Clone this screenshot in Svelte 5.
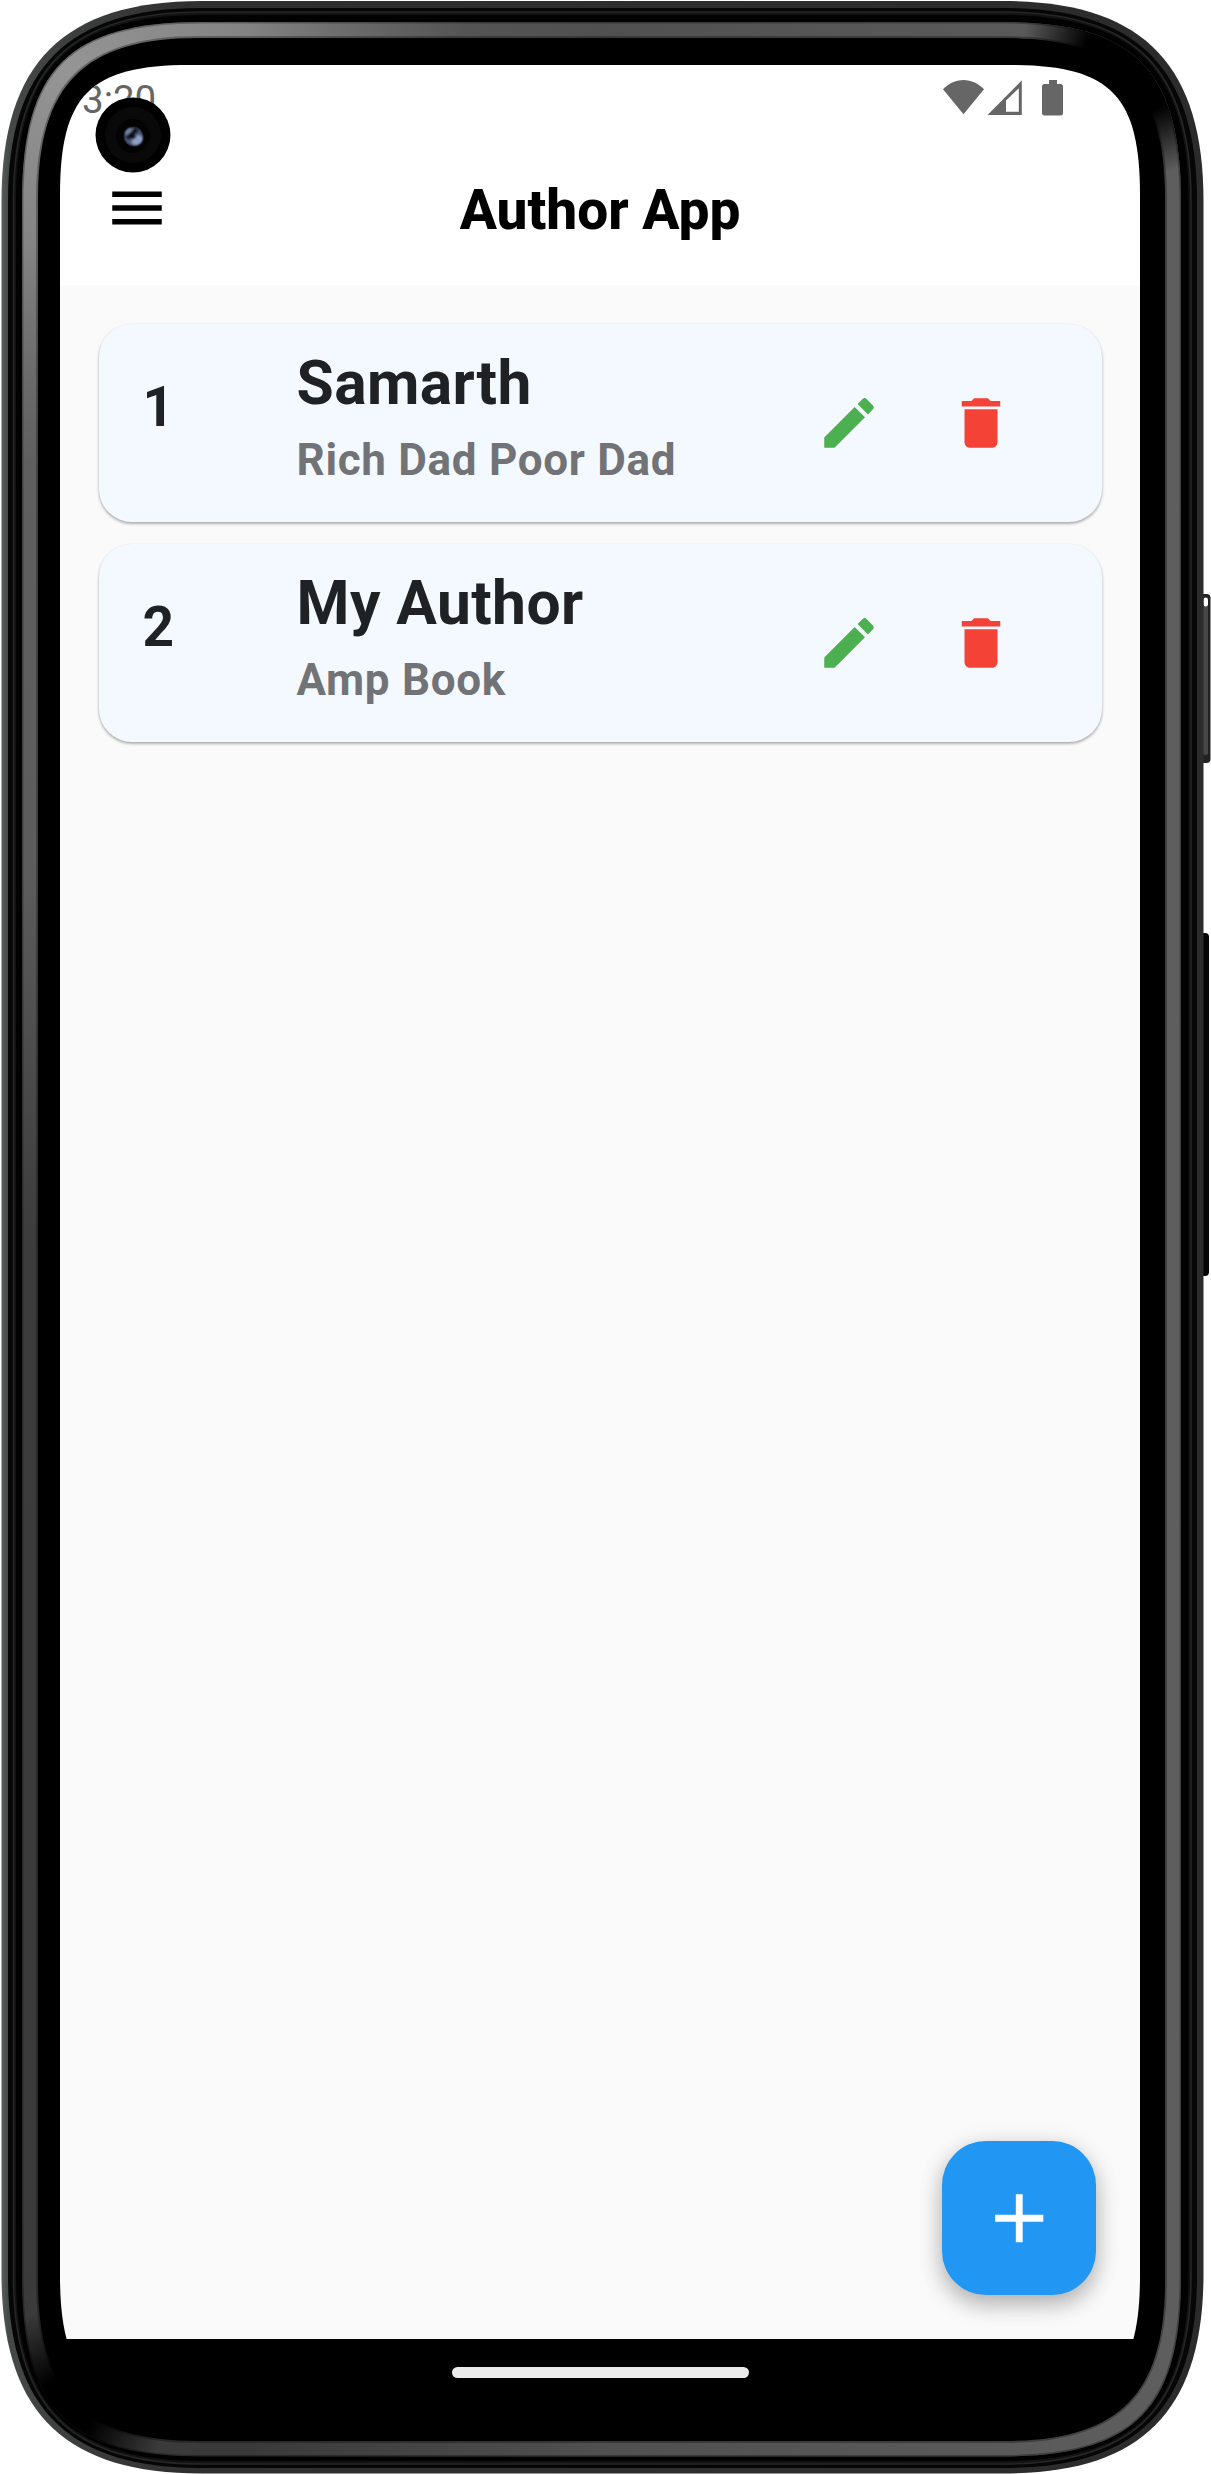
<script>
  const authors = [
    { id: 1, name: 'Samarth', book: 'Rich Dad Poor Dad' },
    { id: 2, name: 'My Author', book: 'Amp Book' }
  ];

  // Closed outline with continuous-curvature corners: s = corner span, k = handle length ratio
  function outline(l, t, r, b, s, k) {
    const h = s * (1 - k);
    return (
      `M${l} ${t + s}C${l} ${t + h} ${l + h} ${t} ${l + s} ${t}` +
      `H${r - s}C${r - h} ${t} ${r} ${t + h} ${r} ${t + s}` +
      `V${b - s}C${r} ${b - h} ${r - h} ${b} ${r - s} ${b}` +
      `H${l + s}C${l + h} ${b} ${l} ${b - h} ${l} ${b - s}Z`
    );
  }

  const shell = outline(1.5, 1, 1203.5, 2473.5, 200, 0.69);
  const seam = outline(8, 8, 1197, 2468, 193, 0.69);
  const groove = outline(13.5, 12, 1191, 2464, 188, 0.7);
  const trench = outline(16, 15, 1188.5, 2461, 186, 0.71);
  const bevelOuter = outline(22, 22, 1181, 2456.5, 180, 0.74);
  const bevelInner = outline(38, 38, 1165, 2441, 160, 0.71);
  const glass = outline(60, 65, 1140, 2405, 130, 0.77);
</script>

<div class="device">
  <svg class="frame" viewBox="0 0 1211 2474" aria-hidden="true">
    <defs>
      <linearGradient id="metal" x1="0" x2="1" y1="0" y2="0">
        <stop offset="0" stop-color="#5a5d5a" />
        <stop offset=".006" stop-color="#444846" />
        <stop offset=".15" stop-color="#303030" />
        <stop offset="1" stop-color="#2b2b2b" />
      </linearGradient>
      <linearGradient id="side" x1="0" x2="0" y1="0" y2="1">
        <stop offset="0" stop-color="#5a5a5a" />
        <stop offset=".12" stop-color="#606060" />
        <stop offset=".35" stop-color="#5c5c5c" />
        <stop offset=".5" stop-color="#3c3c3c" />
        <stop offset="1" stop-color="#3a3a3a" />
      </linearGradient>
      <linearGradient id="lit" x1="0" x2="1" y1="0" y2="0">
        <stop offset=".2" stop-color="#505050" stop-opacity="0" />
        <stop offset=".5" stop-color="#505050" />
        <stop offset="1" stop-color="#5e5e5e" />
      </linearGradient>
      <radialGradient id="shine" gradientUnits="userSpaceOnUse" cx="70" cy="70" r="400">
        <stop offset="0" stop-color="#959595" />
        <stop offset=".45" stop-color="#888" stop-opacity=".9" />
        <stop offset="1" stop-color="#777" stop-opacity="0" />
      </radialGradient>
      <radialGradient id="fadeTop" gradientUnits="userSpaceOnUse" cx="1135" cy="62" r="115">
        <stop offset=".45" stop-color="#000" />
        <stop offset="1" stop-color="#000" stop-opacity="0" />
      </radialGradient>
      <radialGradient id="fadeBottom" gradientUnits="userSpaceOnUse" cx="66" cy="2408" r="100">
        <stop offset=".3" stop-color="#000" />
        <stop offset="1" stop-color="#000" stop-opacity="0" />
      </radialGradient>
    </defs>
    <rect x="1200" y="594" width="10.5" height="169" rx="4" fill="#222" />
    <rect x="1203" y="605" width="5" height="150" rx="2" fill="#474747" />
    <rect x="1203.5" y="597.5" width="4.5" height="9" rx="2.2" fill="#fff" />
    <rect x="1200" y="933" width="9" height="343" rx="4" fill="#050505" />
    <path d={shell} fill="url(#metal)" />
    <path d={seam} fill="#060606" />
    <path d={groove} fill="#121212" stroke="#262626" stroke-width="1.6" />
    <path d={trench} fill="#020202" />
    <path d={bevelOuter} fill="url(#side)" />
    <path d={bevelOuter} fill="url(#lit)" />
    <path d={bevelOuter} fill="url(#shine)" />
    <path d={bevelOuter} fill="url(#fadeTop)" />
    <path d={bevelOuter} fill="url(#fadeBottom)" />
    <path d={bevelOuter} fill="none" stroke="#000" stroke-opacity=".3" stroke-width="3" />
    <path d={bevelInner} fill="#000" stroke="#000" stroke-opacity=".3" stroke-width="4" />
  </svg>

  <div class="screen" style:clip-path={`path('${glass}')`}>
    <div class="status">
      <span class="time">3:20</span>
      <svg class="signals" viewBox="0 0 121 36" aria-hidden="true">
        <path d="M0 9.3C5.5 3.5 12.5 0 20.5 0S35.500 3.500 41 9.300L20.500 34.300Z" />
        <path fill-rule="evenodd" d="M44.500 35 78.800 .3V35ZM63 20.600V31.800H75.800V8.300Z" />
        <path d="M106 0h8v4h3.500q2.500 0 2.500 2.500v26.500q0 2.500-2.500 2.500h-16q-2.500 0-2.500-2.500V6.500q0-2.500 2.500-2.500h4.500Z" />
      </svg>
    </div>

    <header>
      <svg class="icon" viewBox="0 0 24 24"><path d="M3 18h18v-2H3v2zm0-5h18v-2H3v2zm0-7v2h18V6H3z" /></svg>
      <h1>Author App</h1>
      <span class="spacer"></span>
    </header>

    <main>
      {#each authors as author (author.id)}
        <article>
          <span class="num">{author.id}</span>
          <div class="info">
            <h2>{author.name}</h2>
            <p>{author.book}</p>
          </div>
          <button class="edit" aria-label="Edit">
            <svg class="icon" viewBox="0 0 24 24"><path d="M3 17.250V21h3.750L17.810 9.940l-3.750-3.750L3 17.250zM20.710 7.040c.39-.39.39-1.020 0-1.410l-2.340-2.340a.9959.9959 0 0 0-1.410 0l-1.830 1.830 3.750 3.750 1.830-1.830z" /></svg>
          </button>
          <button class="delete" aria-label="Delete">
            <svg class="icon" viewBox="0 0 24 24"><path d="M6 19c0 1.100.9 2 2 2h8c1.100 0 2-.9 2-2V7H6v12zM19 4h-3.500l-1-1h-5l-1 1H5v2h14V4z" /></svg>
          </button>
        </article>
      {/each}
      <button class="fab" aria-label="Add">
        <svg viewBox="0 0 24 24"><path d="M19 13h-6v6h-2v-6H5v-2h6V5h2v6h6v2z" /></svg>
      </button>
    </main>

    <nav><span class="handle"></span></nav>
  </div>

  <svg class="camera" viewBox="0 0 76 76" aria-hidden="true">
    <defs>
      <radialGradient id="lens">
        <stop offset="0" stop-color="#3a4256" />
        <stop offset=".75" stop-color="#4d5a76" />
        <stop offset="1" stop-color="#1a1e2a" />
      </radialGradient>
      <filter id="soft"><feGaussianBlur stdDeviation=".9" /></filter>
    </defs>
    <circle cx="38" cy="38" r="37.500" fill="#000" />
    <circle cx="38" cy="38" r="28" fill="#090909" />
    <circle cx="38" cy="39" r="17" fill="#030303" />
    <circle cx="38.500" cy="39.500" r="10" fill="url(#lens)" />
    <g filter="url(#soft)">
      <ellipse cx="42" cy="43" rx="6" ry="4.500" fill="#8ea1c4" transform="rotate(-35 42 43)" />
      <ellipse cx="34" cy="35" rx="4" ry="3" fill="#7385a6" transform="rotate(-40 34 35)" />
      <path d="M32 41 42 32" stroke="#0c0f1a" stroke-width="4" />
      <path d="M36 41 40 38" stroke="#0c0f1a" stroke-width="5" />
    </g>
  </svg>
</div>

<style>
  :global(body) {
    background: #fff;
  }
  .device {
    position: relative;
    width: 1211px;
    height: 2474px;
    overflow: hidden;
    font-family: Roboto, 'Liberation Sans', sans-serif;
  }
  .frame {
    position: absolute;
    inset: 0;
    width: 1211px;
    height: 2474px;
  }
  .screen {
    position: relative;
    box-sizing: border-box;
    height: 2474px;
    padding: 65px 71px 69px 60px;
    display: flex;
    flex-direction: column;
  }
  .status {
    height: 66px;
    flex: none;
    box-sizing: border-box;
    padding: 15px 76px 0 22px;
    display: flex;
    justify-content: space-between;
    background: #fff;
    color: #666;
  }
  .time {
    font-size: 38.5px;
    line-height: 40px;
  }
  .signals {
    width: 121px;
    height: 36px;
    fill: #666;
  }
  header {
    height: 154px;
    flex: none;
    box-sizing: border-box;
    padding: 0 44px;
    display: flex;
    align-items: center;
    justify-content: space-between;
    background: #fff;
    color: #000;
  }
  .icon {
    display: block;
    width: 66px;
    height: 66px;
    fill: currentColor;
  }
  .spacer {
    width: 66px;
  }
  h1 {
    margin: 0;
    padding-top: 3px;
    font-size: 55px;
    font-weight: 800;
    line-height: 64px;
  }
  main {
    position: relative;
    flex: 1;
    box-sizing: border-box;
    padding: 38.5px;
    display: flex;
    flex-direction: column;
    gap: 22px;
    background: #fafafa;
  }
  article {
    box-sizing: border-box;
    height: 198px;
    padding: 0 55px 0 44px;
    display: flex;
    align-items: center;
    border-radius: 33px;
    background: #f4f9ff;
    color: #202124;
    box-shadow:
      0 2px 3px rgba(0, 0, 0, 0.24),
      0 1px 3px rgba(0, 0, 0, 0.12);
  }
  .num {
    width: 154px;
    font-size: 55px;
    font-weight: 700;
    line-height: 64px;
    padding-bottom: 32px;
  }
  .info {
    flex: 1;
    padding-bottom: 9px;
  }
  h2 {
    margin: 0 0 5px;
    font-size: 60.5px;
    font-weight: 700;
    line-height: 78px;
    letter-spacing: 0.41px;
  }
  p {
    margin: 0;
    font-size: 44px;
    font-weight: 700;
    line-height: 64px;
    letter-spacing: 0.69px;
    color: #727376;
  }
  button {
    margin: 0;
    padding: 0;
    border: 0;
    background: none;
    width: 132px;
    height: 132px;
    display: flex;
    align-items: center;
    justify-content: center;
  }
  .edit {
    color: #4caf50;
  }
  .delete {
    color: #f44336;
  }
  .fab {
    position: absolute;
    right: 44px;
    bottom: 44px;
    width: 154px;
    height: 154px;
    border-radius: 44px;
    background: #2196f3;
    box-shadow:
      0 10px 22px rgba(0, 0, 0, 0.24),
      0 4px 26px rgba(0, 0, 0, 0.1);
  }
  .fab svg {
    width: 82.5px;
    height: 82.5px;
    fill: #fff;
  }
  nav {
    height: 66px;
    flex: none;
    display: flex;
    justify-content: center;
    align-items: center;
    background: #000;
  }
  .handle {
    width: 297px;
    height: 11px;
    border-radius: 6px;
    background: #ebebeb;
  }
  .camera {
    position: absolute;
    left: 94.5px;
    top: 96.5px;
    width: 76px;
    height: 76px;
  }
</style>
